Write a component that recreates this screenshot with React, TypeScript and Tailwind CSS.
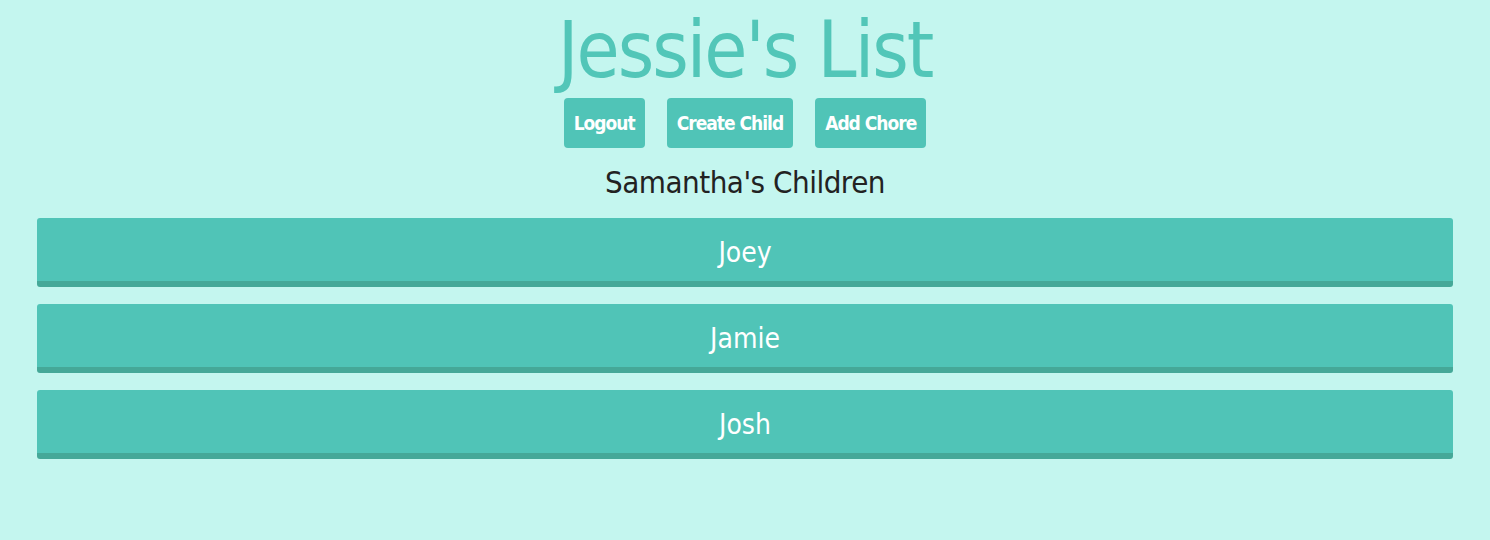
export default function App() {
  const children = ['Joey', 'Jamie', 'Josh'];
  const font = { fontFamily: '"DejaVu Sans Condensed", "DejaVu Sans", sans-serif' };

  return (
    <div className="min-h-[540px] bg-[#c4f6ef] px-[37px] pt-[8px]" style={font}>
      <h1 className="text-center text-[78px] leading-[84px] text-[#52c6b8] tracking-[-2px]">
        Jessie's List
      </h1>
      <div className="mt-[6px] flex justify-center gap-[22px]">
        {['Logout', 'Create Child', 'Add Chore'].map((label) => (
          <button
            key={label}
            className="h-[50px] rounded-[4px] bg-[#50c4b7] px-[10px] text-[19px] font-bold text-white tracking-[-1px]"
          >
            {label}
          </button>
        ))}
      </div>
      <h2 className="mt-[14px] text-center text-[31px] leading-[40px] text-[#222] tracking-[-0.5px]">
        Samantha's Children
      </h2>
      <div className="mt-[16px] flex flex-col gap-[17px]">
        {children.map((name) => (
          <div
            key={name}
            className="flex h-[69px] items-center justify-center rounded-[3px] border-b-[6px] border-[#45a898] bg-[#50c4b7] pt-[6px] text-[28px] text-white"
          >
            {name}
          </div>
        ))}
      </div>
    </div>
  );
}
